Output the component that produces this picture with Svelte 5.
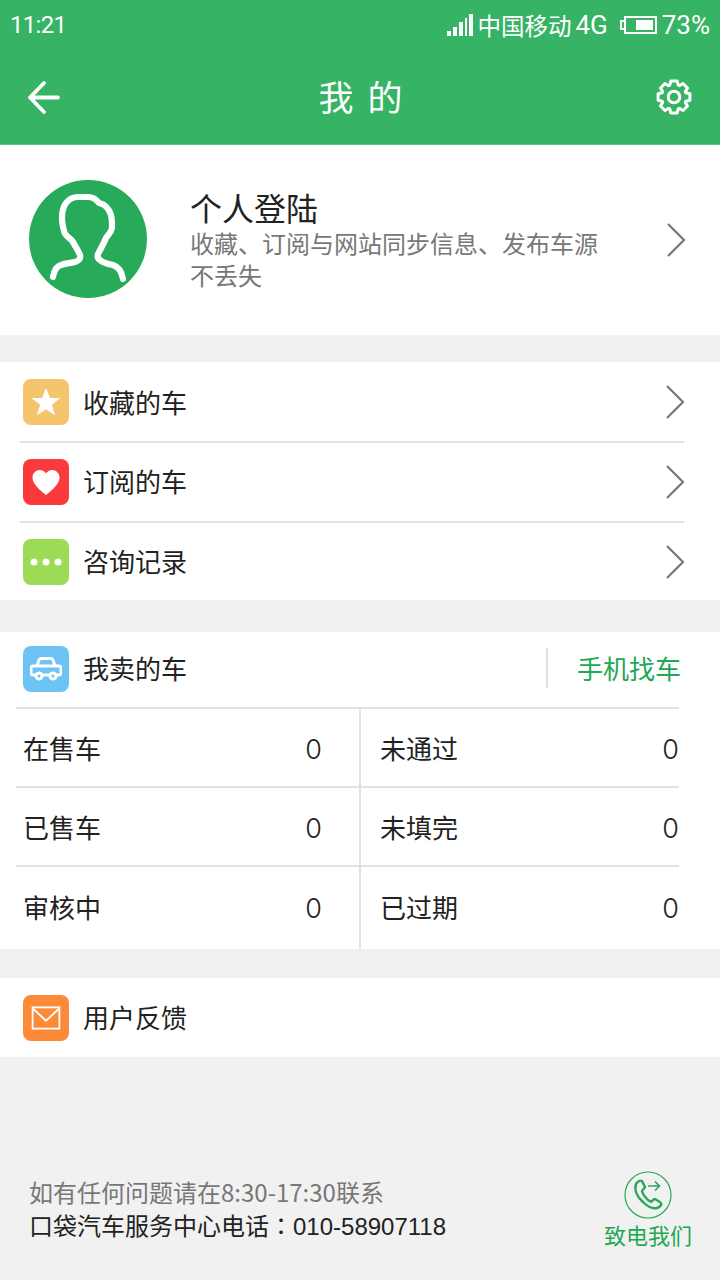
<script>
	const menu = [
		{ label: '收藏的车', icon: 'star', color: '#f4c56c' },
		{ label: '订阅的车', icon: 'heart', color: '#fc3a3e' },
		{ label: '咨询记录', icon: 'dots', color: '#9bdb55' }
	];
	const stats = [
		['在售车', 0, '未通过', 0],
		['已售车', 0, '未填完', 0],
		['审核中', 0, '已过期', 0]
	];

	// 8 tooth gear outline around (18, 18)
	const gear = (() => {
		let d = '';
		for (let i = 0; i < 8; i++) {
			const a = (i * Math.PI) / 4 - Math.PI / 2;
			const pts = [
				[12.5, a - 0.34],
				[16.2, a - 0.2],
				[16.2, a + 0.2],
				[12.5, a + 0.34]
			];
			for (const [r, t] of pts) {
				const x = (18 + r * Math.cos(t)).toFixed(1);
				const y = (18 + r * Math.sin(t)).toFixed(1);
				d += (d ? 'L' : 'M') + x + ' ' + y;
			}
		}
		return d + 'z';
	})();
</script>

<div class="page">
	<header class="top">
		<div class="status">
			<span class="time">11:21</span>
			<div class="status-right">
				<svg width="28" height="24" viewBox="0 0 28 24" fill="#fff">
					<rect x="1" y="18" width="4" height="5" />
					<rect x="7" y="14" width="4" height="9" />
					<rect x="13" y="9" width="4" height="14" />
					<rect x="19" y="5" width="2" height="18" />
					<rect x="23" y="1" width="4" height="22" />
				</svg>
				<span class="carrier">中国移动</span>
				<span class="net">4G</span>
				<svg class="batt" width="38" height="20" viewBox="0 0 38 20" fill="none" stroke="#fff" stroke-width="2">
					<rect x="5" y="2" width="31" height="16" />
					<path d="M5 6H1v8h4" />
					<rect x="16" y="5" width="17" height="10" fill="#fff" stroke="none" />
				</svg>
				<span class="pct">73%</span>
			</div>
		</div>
		<div class="bar">
			<svg width="36" height="36" viewBox="0 0 36 36" fill="none" stroke="#fff" stroke-width="3.8" stroke-linecap="round" stroke-linejoin="round">
				<path d="M18 4L4 18.500l14 14.500M4 18.500h28" />
			</svg>
			<h1>我 的</h1>
			<svg width="36" height="36" viewBox="0 0 36 36" fill="none" stroke="#fff" stroke-width="3" stroke-linejoin="round">
				<path d={gear} />
				<circle cx="18" cy="18" r="5.800" />
			</svg>
		</div>
	</header>

	<section class="profile">
		<svg class="avatar" width="120" height="120" viewBox="0 0 120 120">
			<circle cx="60" cy="60" r="59" fill="#27ab5a" />
			<path d="M25 98C26 92 29 87 33 86C38 84 43 84 47 83C51 82 53 79 52 76C50 71 47 67 45 63C43 59 37 58 36 52C35 48 34 44 34 39C34 32 35 28 38 24C41 20 45 18 50 18L60 18C65 18 68 20 71 24C77 25 81 30 83 36C84 40 84 45 84 49C83 54 80 56 78 59C76 64 73 69 71 73C69 76 69 79 72 81C75 84 80 85 85 86C91 88 94 94 95 100" fill="none" stroke="#fff" stroke-width="6.200" stroke-linecap="round" stroke-linejoin="round" />
		</svg>
		<div class="profile-text">
			<div class="profile-title">个人登陆</div>
			<p>收藏、订阅与网站同步信息、发布车源不丢失</p>
		</div>
		<svg class="chev" width="20" height="36" viewBox="0 0 20 36"><path d="M2 2l16 16L2 34" /></svg>
	</section>

	<section class="menu">
		{#each menu as item, i}
			<div class="row">
				<span class="tile" style="background: {item.color}">
					{#if item.icon === 'star'}
						<svg width="30" height="30" viewBox="0 0 32 32" fill="#fff"><path d="M16 1l4.200 10.800H31.500l-9.200 7 3.400 11.200L16 23.700 6.300 30l3.400-11.200-9.200-7h11.300z" /></svg>
					{:else if item.icon === 'heart'}
						<svg width="30" height="27" viewBox="0 0 32 30" fill="#fff"><path d="M16 29C9 23 1 17 1 9.500 1 4.500 4.800 1 9 1c3 0 5.500 1.500 7 4 1.500-2.500 4-4 7-4 4.200 0 8 3.500 8 8.500C31 17 23 23 16 29z" /></svg>
					{:else}
						<svg width="32" height="8" viewBox="0 0 32 8" fill="#fff"><circle cx="4" cy="4" r="3.500" /><circle cx="16" cy="4" r="3.500" /><circle cx="28" cy="4" r="3.500" /></svg>
					{/if}
				</span>
				<span class="label">{item.label}</span>
				<svg class="chev" width="20" height="36" viewBox="0 0 20 36"><path d="M2 2l16 16L2 34" /></svg>
			</div>
			{#if i < menu.length - 1}
				<div class="rule"></div>
			{/if}
		{/each}
	</section>

	<section class="selling">
		<div class="sell-head">
			<span class="tile" style="background: #6cc4f4">
				<svg width="32" height="24" viewBox="0 0 32 24" fill="none" stroke="#fff" stroke-width="3" stroke-linejoin="round">
					<path d="M7 9l2-6c.3-1 1-1.500 2-1.500h10c1 0 1.700.5 2 1.500l2 6" />
					<path d="M3 9h26c1 0 2 1 2 2v5c0 1-1 2-2 2H3c-1 0-2-1-2-2v-5c0-1 1-2 2-2z" />
					<circle cx="9" cy="19" r="3" fill="#6cc4f4" />
					<circle cx="23" cy="19" r="3" fill="#6cc4f4" />
				</svg>
			</span>
			<span class="label">我卖的车</span>
			<span class="find">手机找车</span>
		</div>
		<div class="grid">
			{#each stats as s}
				<div class="stat-row">
					<div class="cell left"><span>{s[0]}</span><b>{s[1]}</b></div>
					<div class="cell right"><span>{s[2]}</span><b>{s[3]}</b></div>
				</div>
			{/each}
		</div>
	</section>

	<section class="feedback">
		<span class="tile" style="background: #fd8a38">
			<svg width="30" height="24" viewBox="0 0 32 26" fill="none" stroke="#fff" stroke-width="2">
				<rect x="1.500" y="1.500" width="29" height="23" />
				<path d="M2 3l14 13L30 3" />
			</svg>
		</span>
		<span class="label">用户反馈</span>
	</section>

	<footer class="foot">
		<div class="foot-text">
			<div class="hint">如有任何问题请在8:30-17:30联系</div>
			<div class="phone">口袋汽车服务中心电话<span class="colon">：</span><span class="num">010-58907118</span></div>
		</div>
		<div class="call">
			<svg width="48" height="48" viewBox="0 0 48 48" fill="none" stroke="#27a858">
				<circle cx="24" cy="24" r="23" stroke-width="1.200" />
				<path d="M12 13c2-3 4-4 6-3 1 2 2 4 3 6-1 2-2 2-3 4 1 4 5 9 9 11 2-1 2-3 4-3 2 1 4 2 6 4 1 2-1 4-4 5-4 1-9-1-14-6-6-5-9-12-7-18z" stroke-width="2.400" stroke-linejoin="round" />
				<path d="M24 15h11M31 10.500l4.500 4.500-4.500 4.500" stroke-width="1.600" />
			</svg>
			<span>致电我们</span>
		</div>
	</footer>
</div>

<style>
	:global(body) {
		margin: 0;
		background: #f1f1f1;
	}
	.page {
		width: 720px;
		height: 1280px;
		overflow: hidden;
		display: flex;
		flex-direction: column;
		background: #f1f1f1;
		font-family: 'Noto Sans CJK SC', 'Liberation Sans', sans-serif;
		color: #222;
	}

	/* top */
	.top {
		height: 144px;
		background: #36b365;
		border-bottom: 1px solid #5fc285;
		color: #fff;
		flex: none;
	}
	.status {
		height: 50px;
		display: flex;
		justify-content: space-between;
		align-items: center;
		padding: 0 10px;
		font-family: Roboto, sans-serif;
		font-size: 26px;
	}
	.time {
		font-size: 24px;
		letter-spacing: -0.7px;
	}
	.status-right {
		display: flex;
		align-items: center;
	}
	.carrier {
		margin-left: 3px;
		font-family: 'Noto Sans CJK SC', sans-serif;
		font-size: 23.500px;
	}
	.net {
		margin-left: 4px;
	}
	.batt {
		margin-left: 12px;
		margin-right: 4px;
	}
	.bar {
		height: 94px;
		display: flex;
		align-items: center;
		justify-content: space-between;
		padding: 0 28px 2px 26px;
	}
	h1 {
		margin: 0 0 4px 3px;
		font-size: 35px;
		font-weight: 400;
		word-spacing: 6px;
		line-height: 1;
	}

	/* profile */
	.profile {
		height: 190px;
		flex: none;
		box-sizing: border-box;
		background: #fff;
		display: flex;
		align-items: center;
		padding: 0 34px 0 28px;
	}
	.avatar {
		flex: none;
		margin-top: -2px;
	}
	.profile-text {
		margin-left: 43px;
		width: 410px;
		margin-right: auto;
	}
	.profile-title {
		font-size: 32px;
		line-height: 38px;
		margin-top: -2px;
		margin-left: -1px;
		color: #222;
	}
	.profile-text p {
		margin: 1px 0 0 -1px;
		font-size: 24px;
		line-height: 32px;
		color: #777;
	}
	.chev {
		flex: none;
		fill: none;
		stroke: #777;
		stroke-width: 2.200;
	}

	/* menu */
	.menu {
		margin-top: 27px;
		background: #fff;
		flex: none;
	}
	.row {
		height: 78px;
		display: flex;
		align-items: center;
		padding: 0 35px 0 23px;
	}
	.row:first-child {
		height: 79px;
	}
	.row:last-child {
		height: 77px;
	}
	.row:not(:first-child) .label {
		margin-top: -3px;
	}
	.rule {
		height: 2px;
		margin: 0 36px 0 20px;
		background: #e2e2e2;
	}
	.tile {
		width: 46px;
		height: 46px;
		flex: none;
		border-radius: 8px;
		display: flex;
		align-items: center;
		justify-content: center;
	}
	.label {
		margin-left: 14px;
		margin-right: auto;
		font-size: 26px;
		color: #222;
	}

	/* selling */
	.selling {
		margin-top: 32px;
		height: 317px;
		flex: none;
		background: #fff;
		display: flex;
		flex-direction: column;
	}
	.sell-head {
		height: 75px;
		flex: none;
		box-sizing: border-box;
		display: flex;
		align-items: center;
		padding: 0 39px 2px 23px;
	}
	.sell-head .label {
		margin-top: -2px;
	}
	.find {
		font-size: 26px;
		color: #22a854;
		border-left: 2px solid #e2e2e2;
		padding-left: 29px;
		line-height: 40px;
		margin-top: -1px;
	}
	.grid {
		flex: 1;
		margin-left: 16px;
		width: 663px;
		border-top: 2px solid #e2e2e2;
		display: flex;
		flex-direction: column;
	}
	.stat-row {
		height: 79px;
		box-sizing: border-box;
		display: flex;
		border-bottom: 2px solid #e2e2e2;
	}
	.stat-row:last-child {
		height: auto;
		flex: 1;
		border-bottom: none;
	}
	.stat-row:last-child .cell {
		padding-bottom: 3px;
	}
	.cell {
		display: flex;
		align-items: center;
		justify-content: space-between;
		font-size: 26px;
		color: #222;
	}
	.cell b {
		margin-top: 3px;
		font-family: Inter, Roboto, sans-serif;
		font-weight: 300;
		font-size: 27px;
	}
	.left {
		width: 345px;
		box-sizing: border-box;
		padding: 0 37px 0 7px;
		border-right: 2px solid #e2e2e2;
	}
	.right {
		flex: 1;
		padding-left: 19px;
	}

	/* feedback */
	.feedback {
		margin-top: 29px;
		height: 79px;
		flex: none;
		background: #fff;
		display: flex;
		align-items: center;
		padding-left: 23px;
	}
	.feedback .label {
		margin-top: -2px;
	}

	/* footer */
	.foot {
		margin-top: 114px;
		display: flex;
		justify-content: space-between;
		padding: 0 28px 0 29px;
	}
	.foot-text {
		padding-top: 3px;
	}
	.hint {
		font-size: 24px;
		line-height: 36px;
		color: #777;
	}
	.phone {
		font-size: 24px;
		line-height: 30px;
		color: #222;
	}
	.colon {
		font-family: 'Noto Sans CJK TC', sans-serif;
	}
	.num {
		font-family: 'Liberation Sans', sans-serif;
	}
	.call {
		display: flex;
		flex-direction: column;
		align-items: center;
		color: #22a854;
		font-size: 22px;
		line-height: 30px;
	}
</style>
